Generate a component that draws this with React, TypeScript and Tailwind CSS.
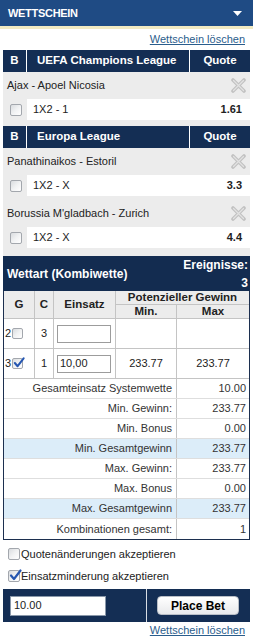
import React from "react";

function Box({ checked = false, size = 12 }: { checked?: boolean; size?: number }) {
  return (
    <span
      className="relative inline-block shrink-0 rounded-[2px] border border-[#a3a7ad] bg-gradient-to-br from-[#d9dcdf] via-[#f1f2f3] to-white"
      style={{ width: size, height: size }}
    >
      {checked && (
        <svg className="absolute left-[0px] top-[-2px]" width={size + 1} height={size + 1} viewBox="0 0 13 13">
          <path d="M2 6.5 L5 10 L11.5 1.5" fill="none" stroke="#2556b0" strokeWidth="2.2" strokeLinecap="round" strokeLinejoin="round" />
        </svg>
      )}
    </span>
  );
}

function CloseX() {
  return (
    <svg width="15" height="15" viewBox="0 0 15 15">
      <path d="M2 2 L13 13 M13 2 L2 13" stroke="#c2c2c2" strokeWidth="3.6" strokeLinecap="round" />
      <path d="M2.5 2.5 L12.5 12.5 M12.5 2.5 L2.5 12.5" stroke="#e2e2e2" strokeWidth="1.2" strokeLinecap="round" />
    </svg>
  );
}

function LeagueHeader({ title }: { title: string }) {
  return (
    <div className="flex h-[22px] bg-[#142e54] text-white font-bold text-[11.5px]">
      <div className="w-[24px] flex items-center justify-center border-r border-white">B</div>
      <div className="w-[163px] flex items-center pl-[10px] border-r border-white">{title}</div>
      <div className="flex-1 flex items-center justify-center">Quote</div>
    </div>
  );
}

function Event({ name, sel, odd, extraTop = false }: { name: string; sel: string; odd: string; extraTop?: boolean }) {
  return (
    <div className={extraTop ? "pt-[4px]" : ""}>
      <div className="h-[27px] flex items-center justify-between pl-[4px] pr-[4px]">
        <span className="text-[#222]">{name}</span>
        <CloseX />
      </div>
      <div className="h-[21px] flex">
        <div className="w-[24px] flex items-center pl-[7px]">
          <Box />
        </div>
        <div className="flex-1 bg-white flex items-center justify-between pl-[6px] pr-[8px]">
          <span>{sel}</span>
          <span className="font-bold">{odd}</span>
        </div>
      </div>
    </div>
  );
}

const summary: { label: string; value: string; blue?: boolean }[] = [
  { label: "Gesamteinsatz Systemwette", value: "10.00" },
  { label: "Min. Gewinn:", value: "233.77" },
  { label: "Min. Bonus", value: "0.00" },
  { label: "Min. Gesamtgewinn", value: "233.77", blue: true },
  { label: "Max. Gewinn:", value: "233.77" },
  { label: "Max. Bonus", value: "0.00" },
  { label: "Max. Gesamtgewinn", value: "233.77", blue: true },
  { label: "Kombinationen gesamt:", value: "1" },
];

export default function App() {
  return (
    <div className="w-[253px] h-[641px] overflow-hidden bg-white font-['Liberation_Sans',Arial,sans-serif] text-[11px] leading-none text-[#222]">
      {/* Top bar */}
      <div className="h-[26px] bg-[#1f4b84] flex items-center justify-between pl-[8px] pr-[11px]">
        <span className="text-white font-bold text-[11px] tracking-[-0.3px]">WETTSCHEIN</span>
        <svg width="9" height="5" viewBox="0 0 9 5">
          <path d="M0 0 H9 L4.5 5 Z" fill="white" />
        </svg>
      </div>
      <div className="h-[3px] bg-[#f1eac2]" />
      <div className="h-[21px] flex items-center justify-end pr-[8px]">
        <span className="text-[#2a5d8c] underline underline-offset-[1px]">Wettschein löschen</span>
      </div>

      {/* Bets */}
      <div className="mx-[3px] bg-[#ececec]">
        <LeagueHeader title="UEFA Champions League" />
        <Event name="Ajax - Apoel Nicosia" sel="1X2 - 1" odd="1.61" />
        <div className="h-[6px]" />
        <LeagueHeader title="Europa League" />
        <Event name="Panathinaikos - Estoril" sel="1X2 - X" odd="3.3" />
        <Event name="Borussia M'gladbach - Zurich" sel="1X2 - X" odd="4.4" extraTop />
        <div className="h-[8px]" />
      </div>

      {/* Wettart */}
      <div className="mx-[3px]">
        <div className="h-[35px] bg-[#132c50] text-white font-bold text-[12px] flex items-center justify-between pl-[4px] pr-[2px]">
          <span>Wettart (Kombiwette)</span>
          <div className="self-start text-right leading-[18px]">
            <div>Ereignisse:</div>
            <div>3</div>
          </div>
        </div>

        <div className="border-x border-b border-[#1c2f4f]">
          {/* table header */}
          <div className="grid grid-cols-[31px_19px_62px_61px_72px] grid-rows-[14px_13px] bg-[#ececec] font-bold text-[11.5px] text-[#222] border-b border-[#c4c4c4]">
            <div className="row-span-2 flex items-center justify-center border-r border-[#c4c4c4]">G</div>
            <div className="row-span-2 flex items-center justify-center border-r border-[#c4c4c4]">C</div>
            <div className="row-span-2 flex items-center justify-center border-r border-[#c4c4c4]">Einsatz</div>
            <div className="col-span-2 flex items-center justify-center border-b border-[#c4c4c4]">Potenzieller Gewinn</div>
            <div className="flex items-center justify-center border-r border-[#c4c4c4]">Min.</div>
            <div className="flex items-center justify-center">Max</div>
          </div>

          {/* data rows */}
          <div className="grid grid-cols-[31px_19px_62px_61px_72px] h-[30px] border-b border-[#c4c4c4]">
            <div className="flex items-center pl-[1px] gap-[1px] border-r border-[#c4c4c4]">
              <span>2</span>
              <Box size={11} />
            </div>
            <div className="flex items-center justify-center border-r border-[#c4c4c4]">3</div>
            <div className="flex items-center pl-[3px] border-r border-[#c4c4c4]">
              <div className="w-[54px] h-[18px] bg-white border border-[#9c9c9c]" />
            </div>
            <div className="border-r border-[#c4c4c4]" />
            <div />
          </div>
          <div className="grid grid-cols-[31px_19px_62px_61px_72px] h-[30px] border-b border-[#c4c4c4]">
            <div className="flex items-center pl-[1px] gap-[1px] border-r border-[#c4c4c4]">
              <span>3</span>
              <Box size={11} checked />
            </div>
            <div className="flex items-center justify-center border-r border-[#c4c4c4]">1</div>
            <div className="flex items-center pl-[3px] border-r border-[#c4c4c4]">
              <div className="w-[54px] h-[18px] bg-white border border-[#9c9c9c] flex items-center pl-[2px]">10,00</div>
            </div>
            <div className="flex items-center justify-center border-r border-[#c4c4c4]">233.77</div>
            <div className="flex items-center justify-center">233.77</div>
          </div>

          {/* summary */}
          {summary.map((r, i) => (
            <div
              key={r.label}
              className={`grid grid-cols-[173px_72px] h-[20px] text-[#333] ${r.blue ? "bg-[#dcedf9]" : "bg-white"} ${i < summary.length - 1 ? "border-b border-[#dedede]" : ""}`}
            >
              <div className="flex items-center justify-end pr-[4px] border-r border-[#c4c4c4]">{r.label}</div>
              <div className="flex items-center justify-end pr-[3px]">{r.value}</div>
            </div>
          ))}
        </div>
      </div>

      {/* options */}
      <div className="pt-[3px] pl-[8px]">
        <div className="h-[22px] flex items-center gap-[1px]">
          <Box />
          <span>Quotenänderungen akzeptieren</span>
        </div>
        <div className="h-[22px] flex items-center gap-[1px]">
          <Box checked />
          <span>Einsatzminderung akzeptieren</span>
        </div>
      </div>

      {/* bottom bar */}
      <div className="mx-[3px] mt-[2px] h-[33px] bg-[#142e54] flex">
        <div className="w-[143px] flex items-center pl-[7px]">
          <div className="w-[96px] h-[20px] bg-white border border-[#8a98aa] flex items-center pl-[3px] text-[#222]">10.00</div>
        </div>
        <div className="w-[1px] bg-[#d8dde4]" />
        <div className="flex-1 flex items-center pl-[10px]">
          <div className="w-[82px] h-[19px] rounded-[4px] border border-[#b9bec6] bg-gradient-to-b from-white to-[#e9eaec] flex items-center justify-center font-bold text-[12px] text-black">
            Place Bet
          </div>
        </div>
      </div>
      <div className="h-[16px] flex items-center justify-end pr-[8px]">
        <span className="text-[#2a5d8c] underline underline-offset-[1px]">Wettschein löschen</span>
      </div>
    </div>
  );
}
